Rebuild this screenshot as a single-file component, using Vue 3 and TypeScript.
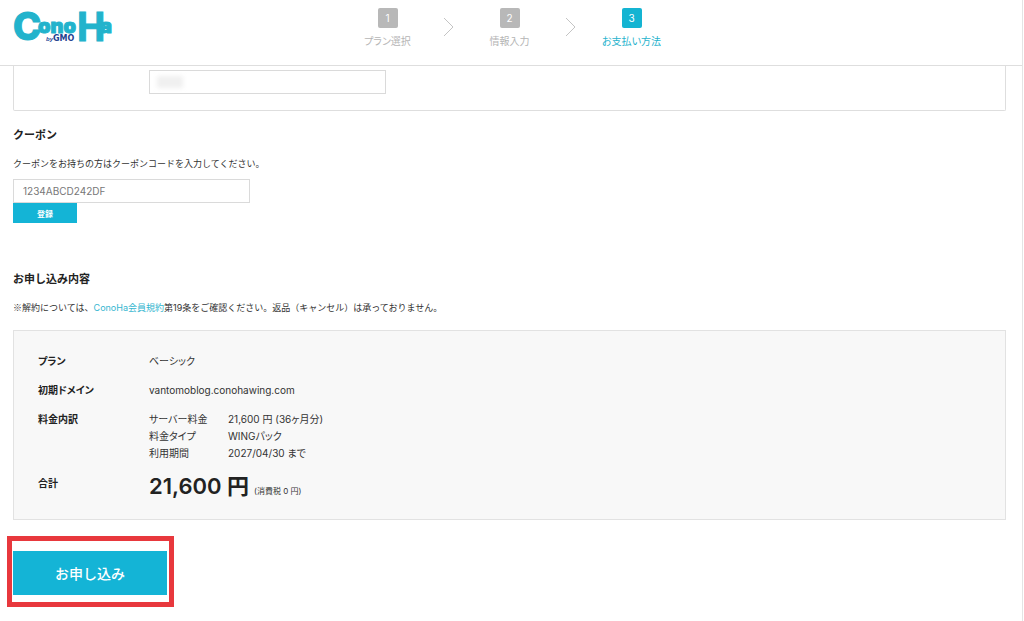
<script setup lang="ts">
import { ref } from 'vue'

interface Step {
  no: number
  label: string
  active: boolean
}

interface Fee {
  label: string
  value: string
}

const steps: Step[] = [
  { no: 1, label: 'プラン選択', active: false },
  { no: 2, label: '情報入力', active: false },
  { no: 3, label: 'お支払い方法', active: true },
]

const fees: Fee[] = [
  { label: 'サーバー料金', value: '21,600 円 (36ヶ月分)' },
  { label: '料金タイプ', value: 'WINGパック' },
  { label: '利用期間', value: '2027/04/30 まで' },
]

const holder = ref('')
const coupon = ref('')
</script>

<template>
  <div class="page">
    <header class="header">
      <a class="logo" href="#" aria-label="ConoHa by GMO">
        <svg width="112" height="56" viewBox="0 0 112 56">
          <g class="logo-main">
            <text class="logo-big" x="0" y="40">C</text>
            <text class="logo-small" x="25" y="33">ono</text>
            <text class="logo-big logo-h" x="64" y="41">H</text>
            <text class="logo-small" x="87" y="33">a</text>
          </g>
          <text class="logo-by" x="33" y="41">by</text>
          <text class="logo-gmo" x="40" y="41">GMO</text>
        </svg>
      </a>
      <ol class="steps">
        <template v-for="step in steps" :key="step.no">
          <li v-if="step.no > 1" class="arrow" aria-hidden="true">
            <svg width="12" height="20" viewBox="0 0 12 20">
              <path d="M1 1 L10 10 L1 19" />
            </svg>
          </li>
          <li class="step" :class="{ active: step.active }">
            <span class="no">{{ step.no }}</span>
            <span>{{ step.label }}</span>
          </li>
        </template>
      </ol>
    </header>

    <main class="main">
      <section class="card-box">
        <div class="masked">
          <input v-model="holder" class="field" type="text" aria-label="カード名義" />
          <span class="smudge"></span>
        </div>
      </section>

      <form class="coupon" @submit.prevent>
        <h2>クーポン</h2>
        <label class="note" for="coupon">クーポンをお持ちの方はクーポンコードを入力してください。</label>
        <input id="coupon" v-model="coupon" class="field" type="text" placeholder="1234ABCD242DF" />
        <button class="register" type="submit">登録</button>
      </form>

      <section class="order">
        <h2>お申し込み内容</h2>
        <p class="note"><span class="mark">※</span>解約については、<a href="#">ConoHa会員規約</a>第19条をご確認ください。返品（キャンセル）は承っておりません。</p>
        <dl class="summary">
          <dt>プラン</dt>
          <dd>ベーシック</dd>
          <dt>初期ドメイン</dt>
          <dd>vantomoblog.conohawing.com</dd>
          <dt>料金内訳</dt>
          <dd>
            <table class="fees">
              <tbody>
                <tr v-for="fee in fees" :key="fee.label">
                  <th scope="row">{{ fee.label }}</th>
                  <td>{{ fee.value }}</td>
                </tr>
              </tbody>
            </table>
          </dd>
          <dt>合計</dt>
          <dd class="total"><strong>21,600 円</strong><small>(消費税 0 円)</small></dd>
        </dl>
      </section>

      <div class="highlight">
        <button class="apply" type="button">お申し込み</button>
      </div>
    </main>
  </div>
</template>

<style>
body {
  margin: 0;
  background: #fff;
}
</style>

<style scoped>
.page {
  box-sizing: border-box;
  min-height: 100vh;
  margin-right: 1px;
  border-right: 1px solid #e4e4e4;
  background: #fff;
  color: #333;
  font-family: Inter, "Noto Sans CJK JP", sans-serif;
  font-size: 10px;
  line-height: 16px;
  font-feature-settings: "palt";
}

.header {
  display: grid;
  grid-template-columns: 1fr auto 1fr;
  box-sizing: border-box;
  height: 66px;
  padding: 0 16px 0 13px;
  border-bottom: 1px solid #dedede;
}

.logo svg {
  display: block;
}

.logo-main {
  fill: #22b3cc;
  stroke: #22b3cc;
  stroke-width: 1;
}

.logo-big {
  font: 800 38px Inter, sans-serif;
}

.logo-h {
  font: 700 40px "Liberation Sans Narrow", Roboto, sans-serif;
}

.logo-small {
  font: 900 20px Inter, sans-serif;
}

.logo-by {
  fill: #2b4c9b;
  font: italic 700 6px "Liberation Sans", sans-serif;
}

.logo-gmo {
  fill: #22418f;
  font: 700 8px "DejaVu Sans", sans-serif;
}

.steps {
  display: flex;
  margin: 0;
  padding: 8px 0 0;
  list-style: none;
}

.step {
  display: flex;
  flex-direction: column;
  align-items: center;
  gap: 5px;
  width: 80px;
  color: #b5b5b5;
}

.no {
  width: 20px;
  border-radius: 2px;
  background: #b8b8b8;
  color: #fff;
  line-height: 20px;
  text-align: center;
}

.active {
  color: #1fb3cd;
}

.active .no {
  background: #14b4d2;
}

.arrow {
  display: flex;
  justify-content: center;
  width: 42px;
  padding-top: 9px;
}

.arrow path {
  fill: none;
  stroke: #c4c4c4;
  stroke-width: 1;
}

.main {
  padding: 0 16px 13px 13px;
}

.card-box {
  padding: 4px 0 16px 135px;
  border: 1px solid #dedede;
  border-top: 0;
  border-radius: 0 0 2px 2px;
}

.masked {
  position: relative;
}

.smudge {
  position: absolute;
  top: 6px;
  left: 8px;
  width: 26px;
  height: 12px;
  background: #f0f0f0;
  filter: blur(2px);
}

.field {
  display: block;
  box-sizing: border-box;
  width: 237px;
  height: 24px;
  padding: 0 9px;
  border: 1px solid #dadada;
  border-radius: 0;
  background: #fff;
  color: #333;
  font: inherit;
}

.field::placeholder {
  color: #777;
  opacity: 1;
}

h2 {
  margin: 0 0 13px;
  color: #222;
  font-size: 11px;
  font-weight: 700;
  font-feature-settings: normal;
  line-height: 16px;
}

.coupon {
  padding-top: 16px;
}

.note {
  display: block;
  margin: 0 0 7px;
  font-size: 9px;
  font-feature-settings: normal;
}

.note a {
  color: #35b6d0;
  text-decoration: none;
}

.mark {
  font-family: "Noto Sans CJK JP", sans-serif;
}

button {
  display: block;
  padding: 0;
  border: 0;
  border-radius: 0;
  background: #14b4d6;
  color: #fff;
  font-family: inherit;
  cursor: pointer;
}

.register {
  width: 64px;
  height: 20px;
  font-size: 8px;
  font-weight: 700;
}

.order {
  padding-top: 48px;
}

.order .note {
  margin-bottom: 14px;
}

.summary {
  display: grid;
  grid-template-columns: 111px 1fr;
  row-gap: 13px;
  margin: 0;
  padding: 22px 24px;
  border: 1px solid #e2e2e2;
  background: #f8f8f8;
}

.summary dt {
  color: #222;
  font-weight: 700;
}

.summary dd {
  margin: 0;
}

.fees {
  border-collapse: collapse;
  line-height: 17px;
}

.fees th {
  width: 79px;
  padding: 0;
  font-weight: 400;
  text-align: left;
}

.fees td {
  padding: 0;
}

.total {
  display: flex;
  align-items: baseline;
  gap: 5px;
  line-height: 22px;
}

.total strong {
  color: #222;
  font-size: 22px;
  font-weight: 600;
}

.total small {
  font-size: 8px;
  line-height: 12px;
}

.highlight {
  width: fit-content;
  margin: 16px 0 0 -6px;
  padding: 10px 2px 7px 1px;
  border: 5px solid #e8383d;
}

.apply {
  width: 154px;
  height: 44px;
  font-size: 14px;
  font-weight: 500;
}
</style>
